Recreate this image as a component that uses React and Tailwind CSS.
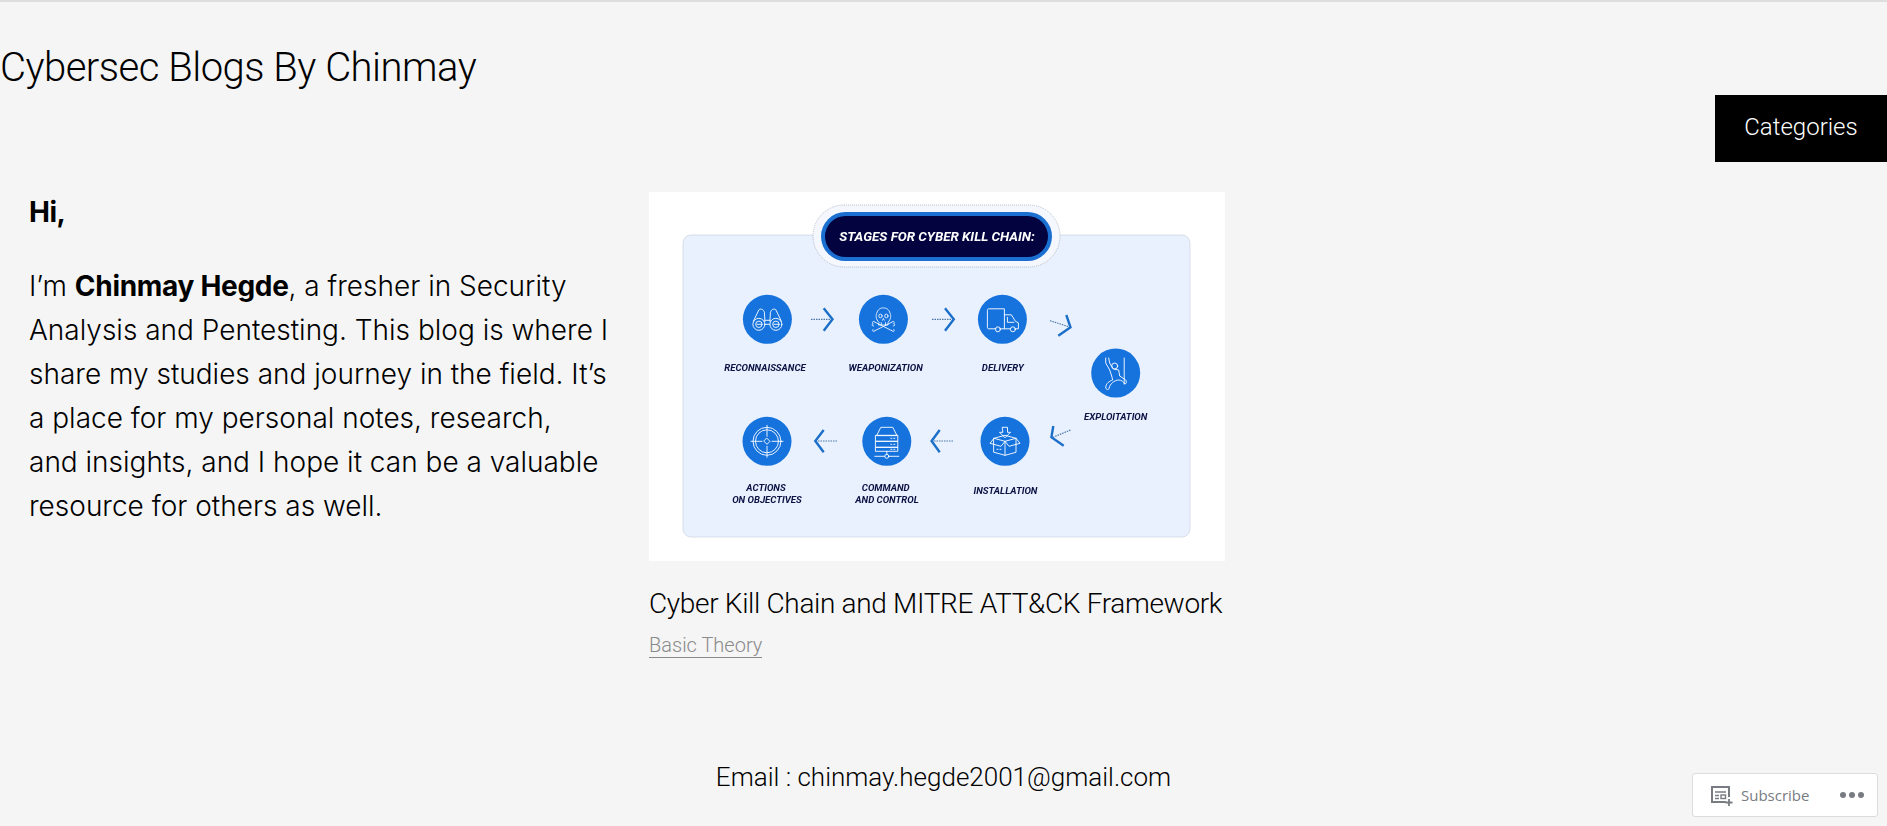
const arrows = [
  { dots: 'M162 127.3H181', head: 'M174.7 116.3L183.5 127.3L174.7 138.7' },
  { dots: 'M283 127.3H302', head: 'M296 116.3L304.8 127.3L296 138.7' },
  { dots: 'M401 128.7L419 134.5', head: 'M417.3 123L421.5 135.3L409.3 143.7' },
  { dots: 'M421.5 238L404 245.3', head: 'M404.3 234L402.4 245.3L414.7 253.7' },
  { dots: 'M304 249H285', head: 'M290.7 238L282.6 249L290.7 260.3' },
  { dots: 'M188 249H169', head: 'M174.7 238L166.3 249L174.7 260.3' },
]

const labels = [
  ['RECONNAISSANCE', 116, 179],
  ['WEAPONIZATION', 236.7, 179],
  ['DELIVERY', 353.8, 179],
  ['EXPLOITATION', 466.7, 228],
  ['INSTALLATION', 356.5, 302],
  ['COMMAND', 236.7, 298.5],
  ['AND CONTROL', 238, 310.5],
  ['ACTIONS', 117, 298.5],
  ['ON OBJECTIVES', 118, 310.5],
]

function Binoculars() {
  return (
    <g>
      <circle cx="-8.5" cy="5" r="6" />
      <circle cx="8.5" cy="5" r="6" />
      <circle cx="-8.5" cy="5" r="3.2" />
      <circle cx="8.5" cy="5" r="3.2" />
      <path d="M-10.5 5H-6.5M6.5 5H10.5M-14 2L-8.5 -9.5C-6.5 -11 -4 -10 -3 -7L-2.5 2M14 2L8.5 -9.5C6.5 -11 4 -10 3 -7L2.5 2M-2.5 1H2.5M-2.5 5H2.5" />
    </g>
  )
}

function Skull() {
  return (
    <g transform="scale(0.85 0.95)">
      <path d="M-5.5 3C-9 0 -9 -4 -8 -6C-6.5 -11 -3 -12 0 -12C3 -12 6.5 -11 8 -6C9 -4 9 0 5.5 3V6H-5.5Z" />
      <circle cx="-3.5" cy="-3.5" r="2" />
      <circle cx="3.5" cy="-3.5" r="2" />
      <path d="M-1 1L0 -1L1 1M-2.5 6V3.5M2.5 6V3.5" />
      <path d="M-10 3L10 12M10 3L-10 12M-10 3C-12 1 -14 3 -12 5C-14 5 -14 7 -11.5 7M10 3C12 1 14 3 12 5C14 5 14 7 11.5 7M-10 12C-12 14 -14 12 -12 10.5M10 12C12 14 14 12 12 10.5" />
    </g>
  )
}

function Truck() {
  return (
    <g>
      <path d="M-6.5 9.5H-13.5C-14.5 9.5 -15 9 -15 8V-9C-15 -10 -14.5 -10.5 -13.5 -10.5H2V9.5H-2.5" />
      <path d="M2 -4.5H9L13 2L16 3.5V9.5H12.5M8 9.5H2M5 -2V3H11.5" />
      <circle cx="-4.5" cy="10" r="2.5" />
      <circle cx="10.5" cy="10" r="2.5" />
    </g>
  )
}

function Climber() {
  return (
    <g>
      <circle cx="-1" cy="-7" r="3" />
      <path d="M8.5 -15V11M-10 -15L-10 -10L-6 -3L-4 3L-3 7C-6 8 -10 10 -10 15C-9 17 -7 17 -6.5 15C-6 11 -1 7 3 7C6 7 8 9 9 11C11 11 11 8 10 7L4 3L3 -3L-2 -4" />
      <path d="M-7 -15L-6 -10L-3 -5" />
    </g>
  )
}

function Box() {
  return (
    <g>
      <path d="M-11 -3L0 -6L11 -3V11L0 14L-11 11ZM0 0V14M-11 -3L0 0L11 -3M-11 -3L-15 2L-4 5L0 0L4 5L15 2L11 -3" />
      <path d="M-2.5 -14H2.5V-9H5.5L0 -3.5L-5.5 -9H-2.5Z" />
      <path d="M-8 8H-7M-5 8H-4" />
    </g>
  )
}

function Server() {
  return (
    <g>
      <path d="M-10 -6L-6 -14H6L10 -6ZM-11 -6H11V0H-11ZM-11 0H11V6H-11ZM-11 6H11V10H-11ZM0 10V13M-12 15H-2M2 15H12" />
      <circle cx="0" cy="15" r="2" />
      <path d="M4 -3H5M7 -3H8M4 3H5M7 3H8M4 8H5M7 8H8" />
    </g>
  )
}

function Target() {
  return (
    <g>
      <circle r="14" />
      <circle r="11.5" />
      <path d="M-16 0H-5M5 0H16M0 -16V-5M0 5V16" />
      <path d="M0 -3L3 0L0 3L-3 0Z" />
    </g>
  )
}

const circles = [
  { x: 118.4, y: 127.3, icon: <Binoculars /> },
  { x: 234.4, y: 127.3, icon: <Skull /> },
  { x: 353.4, y: 127.3, icon: <Truck /> },
  { x: 466.7, y: 181, icon: <Climber /> },
  { x: 356, y: 249.3, icon: <Box /> },
  { x: 237.8, y: 249.3, icon: <Server /> },
  { x: 118, y: 249.3, icon: <Target /> },
]

function KillChainDiagram() {
  return (
    <svg viewBox="0 0 576 369" className="block w-[576px] h-[369px] bg-white blur-[0.3px]">
      <rect x="34" y="43" width="507" height="302" rx="8" fill="#e8f1fd" stroke="#cfd8e3" strokeWidth="0.8" />
      <rect x="164" y="13" width="247" height="62" rx="31" fill="#f4f8fe" stroke="#8f98a6" strokeWidth="0.6" strokeDasharray="1 1" />
      <rect x="172" y="20" width="231" height="49" rx="24.5" fill="#1a6fd1" />
      <rect x="176" y="24" width="223" height="41" rx="20.5" fill="#02033f" />
      <text x="288" y="48.5" textAnchor="middle" fill="#fff" fontFamily="Roboto, sans-serif" fontStyle="italic" fontWeight="700" fontSize="13.4">
        STAGES FOR CYBER KILL CHAIN:
      </text>
      {circles.map((c) => (
        <g key={c.x + '-' + c.y} transform={`translate(${c.x} ${c.y})`}>
          <circle r="24.5" fill="#1673dd" />
          <g fill="none" stroke="#fff" strokeWidth="0.9" strokeLinejoin="round" strokeLinecap="round">
            {c.icon}
          </g>
        </g>
      ))}
      {arrows.map((a) => (
        <g key={a.head} fill="none">
          <path d={a.dots} stroke="#4a76a8" strokeWidth="1.2" strokeDasharray="1.5 1" />
          <path d={a.head} stroke="#1c6fc9" strokeWidth="2.4" />
        </g>
      ))}
      {labels.map(([text, x, y]) => (
        <text key={text} x={x} y={y} textAnchor="middle" fill="#0c1244" fontFamily="Roboto, sans-serif" fontStyle="italic" fontWeight="700" fontSize="9.6">
          {text}
        </text>
      ))}
    </svg>
  )
}

export default function App() {
  return (
    <div className="relative h-screen overflow-hidden bg-[#f5f5f5] border-t-2 border-[#dedede] text-black font-['Roboto',sans-serif] font-light">
      <header className="flex flex-col">
        <h1 className="pt-[42px] text-[40px] leading-[48px] font-light tracking-[-0.5px]">Cybersec Blogs By Chinmay</h1>
        <nav className="mt-[3px] self-end w-[172px] h-[67px] pb-[4px] bg-black text-white flex items-center justify-center text-2xl">
          Categories
        </nav>
      </header>

      <main className="flex mt-[28px]">
        <section className="w-[649px] pl-[29px] text-[28px] leading-[44px] font-['Inter',sans-serif]">
          <p className="font-bold tracking-[-0.5px]">Hi,</p>
          <p className="mt-[30px]">
            I’m <strong className="font-bold tracking-[-0.3px]">Chinmay Hegde</strong>, a fresher in Security<br />
            Analysis and Pentesting. This blog is where I<br />
            share my studies and journey in the field. It’s<br />
            a place for my personal notes, research,<br />
            and insights, and I hope it can be a valuable<br />
            resource for others as well.
          </p>
        </section>
        <article className="w-[576px] pt-[2px]">
          <KillChainDiagram />
          <h2 className="mt-[25px] text-[28px] leading-9 whitespace-nowrap tracking-[-0.33px]">Cyber Kill Chain and MITRE ATT&amp;CK Framework</h2>
          <a className="inline-block mt-[11px] text-xl leading-6 text-[#8a8a8a] border-b border-[#8a8a8a]">Basic Theory</a>
        </article>
      </main>

      <footer className="mt-[100px] text-center text-[26px] leading-9">Email : chinmay.hegde2001@gmail.com</footer>

      <div className="absolute right-[9px] bottom-[9px] w-[186px] h-[44px] flex items-center bg-white border border-[#dcdcdc] rounded-[3px] text-[#787c82] font-normal text-[15px] font-['Open_Sans',sans-serif]">
        <svg viewBox="0 0 24 24" className="ml-[16px] w-[24px] h-[24px]" fill="none" stroke="#787c82" strokeWidth="2">
          <path d="M17 19H3V4H20V14" />
          <path d="M6 9H17M6 12.5H10M6 15.5H10" strokeWidth="1.6" />
          <rect x="12" y="12" width="4.5" height="3.5" strokeWidth="1.4" />
          <path d="M20 16V23M16.5 19.5H23.5" strokeWidth="1.8" />
        </svg>
        <span className="ml-[8px] pt-[1px]">Subscribe</span>
        <span className="ml-auto mr-[13px] flex gap-[3px]">
          <i className="w-[6px] h-[6px] rounded-full bg-[#787c82]" />
          <i className="w-[6px] h-[6px] rounded-full bg-[#787c82]" />
          <i className="w-[6px] h-[6px] rounded-full bg-[#787c82]" />
        </span>
      </div>
    </div>
  )
}
